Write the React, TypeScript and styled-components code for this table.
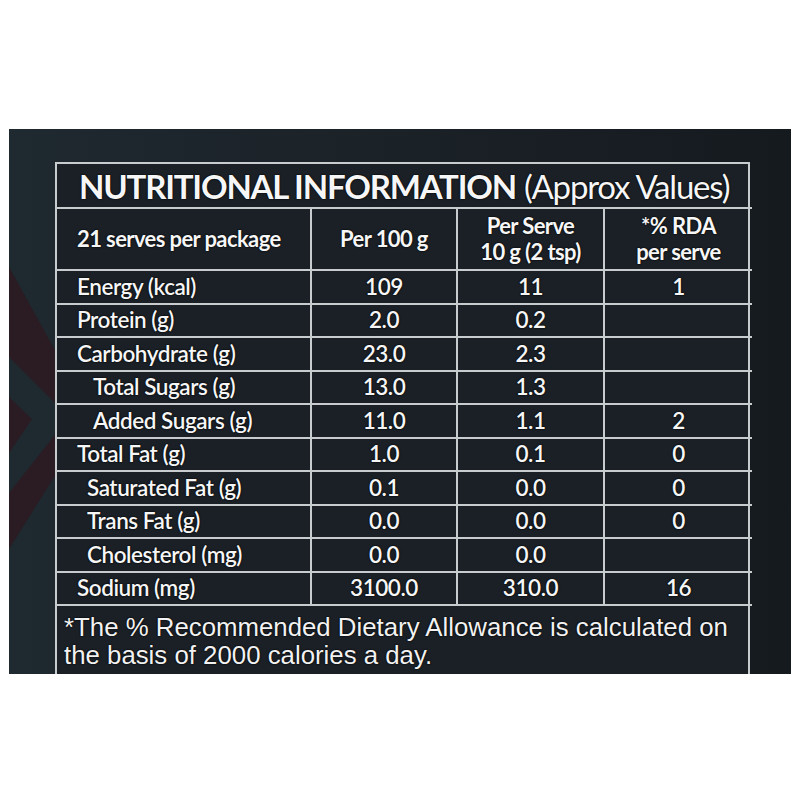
import React from "react";
import styled, { createGlobalStyle } from "styled-components";

const Global = createGlobalStyle`
  html, body { margin: 0; padding: 0; background: #ffffff; }
  body { width: 800px; height: 800px; overflow: hidden; }
`;

const Page = styled.div`
  width: 800px;
  height: 800px;
  padding-top: 129px;
  padding-left: 9px;
  box-sizing: border-box;
`;

const Panel = styled.div`
  position: relative;
  width: 782px;
  height: 545px;
  box-sizing: border-box;
  padding: 33px 0 0 46px;
  background: linear-gradient(90deg, #1f2930 0%, #1b2228 45%, #151a1f 100%);
  overflow: hidden;
`;

const Deco = styled.svg`
  position: absolute;
  left: 0;
  top: 0;
`;

const Table = styled.div`
  position: relative;
  width: 695px;
  display: grid;
  grid-template-columns: 255px 146px 147px 147px;
  grid-template-rows: 45px 62px repeat(10, 33.5px) 1fr;
  height: 512px;
  box-sizing: border-box;
  border: 2px solid #c9cccf;
  border-bottom: none;
  background: #1a2026;
  font-family: Lato, "Open Sans", sans-serif;
  color: #f6f6f6;
  text-shadow: 0 0 2px #000, 0 0 1px #000;
`;

const Title = styled.div`
  grid-column: 1 / -1;
  display: flex;
  align-items: center;
  padding-left: 22px;
  font-size: 33px;
  letter-spacing: -1.2px;
  white-space: nowrap;
  border-bottom: 2px solid #c9cccf;
  b { font-weight: 700; }
  span { font-weight: 400; margin-left: 8px; }
`;

const Cell = styled.div<{ $align?: "left" | "center"; $indent?: number; $last?: boolean; $head?: boolean }>`
  display: flex;
  flex-direction: column;
  justify-content: center;
  align-items: ${(p) => (p.$align === "left" ? "flex-start" : "center")};
  padding-left: ${(p) => (p.$align === "left" ? 20 + (p.$indent || 0) : 0)}px;
  border-right: ${(p) => (p.$last ? "none" : "2px solid #c9cccf")};
  border-bottom: 2px solid #c9cccf;
  font-size: ${(p) => (p.$head ? 22 : 22.5)}px;
  font-weight: ${(p) => (p.$head ? 700 : 600)};
  letter-spacing: ${(p) => (p.$head ? -0.6 : -0.45)}px;
  line-height: ${(p) => (p.$head ? 26 : 24)}px;
  white-space: nowrap;
  text-align: center;
`;

const Footer = styled.div`
  grid-column: 1 / -1;
  padding: 7px 0 0 7px;
  font-family: "Liberation Sans", Arial, sans-serif;
  font-size: 25.8px;
  line-height: 28px;
  color: #f2f2f2;
`;

type Row = { name: string; indent?: number; a: string; b: string; c: string };

const rows: Row[] = [
  { name: "Energy (kcal)", a: "109", b: "11", c: "1" },
  { name: "Protein (g)", a: "2.0", b: "0.2", c: "" },
  { name: "Carbohydrate (g)", a: "23.0", b: "2.3", c: "" },
  { name: "Total Sugars (g)", indent: 16, a: "13.0", b: "1.3", c: "" },
  { name: "Added Sugars (g)", indent: 16, a: "11.0", b: "1.1", c: "2" },
  { name: "Total Fat (g)", a: "1.0", b: "0.1", c: "0" },
  { name: "Saturated Fat (g)", indent: 10, a: "0.1", b: "0.0", c: "0" },
  { name: "Trans Fat (g)", indent: 10, a: "0.0", b: "0.0", c: "0" },
  { name: "Cholesterol (mg)", indent: 10, a: "0.0", b: "0.0", c: "" },
  { name: "Sodium (mg)", a: "3100.0", b: "310.0", c: "16" },
];

export default function App() {
  return (
    <>
      <Global />
      <Page>
        <Panel>
          <Deco width="60" height="545" viewBox="0 0 60 545">
            <polygon points="0,138 83,288 0,420" fill="#2a1c22" />
            <polygon points="0,228 60,288 0,364" fill="#1f2930" />
            <polygon points="0,268 23,290 0,324" fill="#2a1c22" />
          </Deco>
          <Table>
            <Title>
              <b>NUTRITIONAL INFORMATION</b>
              <span>(Approx Values)</span>
            </Title>
            <Cell $head $align="left">21 serves per package</Cell>
            <Cell $head>Per 100 g</Cell>
            <Cell $head>
              <div>Per Serve</div>
              <div>10 g (2 tsp)</div>
            </Cell>
            <Cell $head $last>
              <div>*% RDA</div>
              <div>per serve</div>
            </Cell>
            {rows.map((r) => (
              <React.Fragment key={r.name}>
                <Cell $align="left" $indent={r.indent}>{r.name}</Cell>
                <Cell>{r.a}</Cell>
                <Cell>{r.b}</Cell>
                <Cell $last>{r.c}</Cell>
              </React.Fragment>
            ))}
            <Footer>
              *The % Recommended Dietary Allowance is calculated on
              <br />
              the basis of 2000 calories a day.
            </Footer>
          </Table>
        </Panel>
      </Page>
    </>
  );
}
